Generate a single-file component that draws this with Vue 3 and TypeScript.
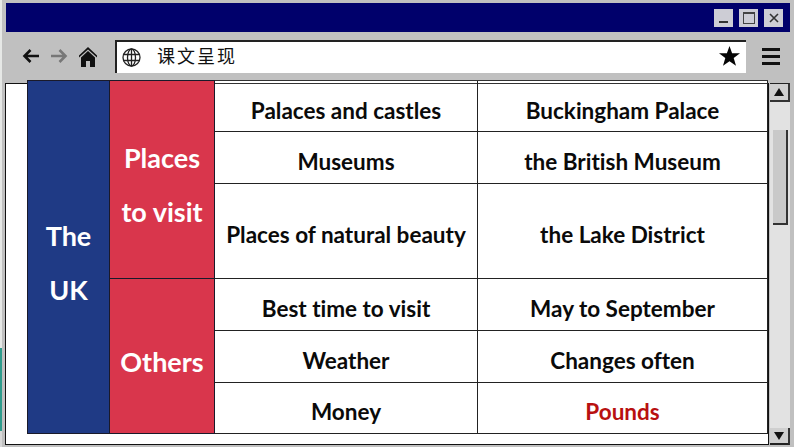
<script setup lang="ts">
interface Row { label: string; value: string; accent?: boolean }
const rows: Row[] = [
  { label: 'Palaces and castles', value: 'Buckingham Palace' },
  { label: 'Museums', value: 'the British Museum' },
  { label: 'Places of natural beauty', value: 'the Lake District' },
  { label: 'Best time to visit', value: 'May to September' },
  { label: 'Weather', value: 'Changes often' },
  { label: 'Money', value: 'Pounds', accent: true },
]
</script>

<template>
  <div class="window">
    <div class="strip"></div>
    <header class="titlebar">
      <button class="winbtn"><span class="min"></span></button>
      <button class="winbtn"><span class="max"></span></button>
      <button class="winbtn">
        <svg width="12" height="12" viewBox="0 0 12 12"><path d="M2 2l8 8M10 2l-8 8" stroke="#333" stroke-width="1.6" /></svg>
      </button>
    </header>
    <nav class="toolbar">
      <svg class="nav" width="18" height="16" viewBox="0 0 18 16"><path d="M17 8H3M8.500 2L2.500 8l6 6" fill="none" stroke="#111" stroke-width="2.6" /></svg>
      <svg class="nav fwd" width="18" height="16" viewBox="0 0 18 16"><path d="M1 8h14M9.500 2l6 6-6 6" fill="none" stroke="#777" stroke-width="2.6" /></svg>
      <svg class="home" width="18" height="20" viewBox="0 0 18 20"><path d="M9 0L0 8.500v2L9 2.500l9 8v-2z M9 4L2 10.500V20h5v-6h4v6h5v-9.500z" fill="#111" /></svg>
      <div class="address">
        <svg width="19" height="19" viewBox="0 0 19 19" fill="none" stroke="#222" stroke-width="1.3">
          <circle cx="9.500" cy="9.500" r="8.500" />
          <ellipse cx="9.500" cy="9.500" rx="4" ry="8.500" />
          <path d="M9.500 1v17M1.500 6.500h16M1.500 12.500h16" />
        </svg>
        <span class="url">课文呈现</span>
        <svg class="star" width="21" height="20" viewBox="0 0 21 20"><path d="M10.500 0l2.600 7.300h7.900l-6.300 4.800 2.300 7.700-6.500-4.600-6.500 4.600 2.300-7.700L0 7.300h7.900z" fill="#050505" /></svg>
      </div>
      <div class="burger"><i></i><i></i><i></i></div>
    </nav>
    <main class="body">
      <div class="pane"></div>
      <aside class="scrollbar">
        <div class="arrow"><span class="up"></span></div>
        <div class="track"><div class="thumb"></div></div>
        <div class="arrow down"><span class="dn"></span></div>
      </aside>
    </main>
    <section class="sheet">
      <div class="head navy">The<br />UK</div>
      <div class="head red g1">Places<br />to visit</div>
      <div class="head red g2">Others</div>
      <template v-for="(r, i) in rows" :key="r.label">
        <div class="cell label" :class="{ first: i === 0 }" :style="{ gridRow: i + 1 }">{{ r.label }}</div>
        <div class="cell value" :class="{ first: i === 0, accent: r.accent }" :style="{ gridRow: i + 1 }">{{ r.value }}</div>
      </template>
    </section>
  </div>
</template>

<style>
html, body { margin: 0; background: #fff; }
</style>

<style scoped>
.window {
  position: relative;
  width: 794px;
  height: 447px;
  box-sizing: border-box;
  padding: 3px 4px 0 6px;
  background: #c0c0c0;
  overflow: hidden;
  display: flex;
  flex-direction: column;
  font-family: Lato, "Liberation Sans", sans-serif;
  font-variant-ligatures: none;
}
.strip {
  position: absolute;
  left: 0;
  top: 0;
  width: 2px;
  height: 447px;
  background: linear-gradient(#e6e8e6 0 348px, #2f9c8c 348px 431px, #d8d8d8 431px);
}
.titlebar {
  height: 29px;
  flex: none;
  background: #00006b;
  display: flex;
  align-items: center;
  justify-content: flex-end;
  gap: 6px;
  padding-right: 7px;
  box-sizing: border-box;
}
.winbtn {
  width: 19px;
  height: 18px;
  padding: 0;
  border: 0;
  background: #cdcdd5;
  display: flex;
  align-items: center;
  justify-content: center;
  position: relative;
}
.min { width: 9px; height: 2px; background: #333; margin-top: 9px; }
.max { width: 10px; height: 9px; border: 1.5px solid #444; border-top-width: 2px; }
.toolbar {
  height: 48px;
  flex: none;
  display: flex;
  align-items: center;
  box-sizing: border-box;
  padding: 0 10px 0 16px;
}
.nav { flex: none; }
.fwd { margin-left: 10px; }
.home { margin-left: 11px; margin-top: 1px; flex: none; }
.address {
  margin-left: 18px;
  width: 631px;
  height: 33px;
  flex: none;
  box-sizing: border-box;
  background: #fff;
  border-top: 2px solid #222;
  border-left: 2px solid #222;
  display: flex;
  align-items: center;
  padding: 0 6px 0 5px;
}
.url {
  margin-left: 16px;
  margin-top: -5px;
  font-family: "Noto Sans CJK SC", sans-serif;
  font-size: 18px;
  letter-spacing: 2px;
  color: #111;
}
.star { margin-left: auto; margin-top: -3px; }
.burger {
  margin-left: 16px;
  width: 18px;
  display: flex;
  flex-direction: column;
  gap: 4px;
}
.burger i { display: block; height: 3px; background: #111; }
.body {
  flex: 1;
  display: flex;
  min-height: 0;
  margin-left: -1px;
  margin-top: 3px;
  padding-bottom: 2px;
}
.pane {
  width: 764px;
  box-sizing: border-box;
  background: #fff;
  border: 1.5px solid #111;
  flex: none;
}
.scrollbar {
  margin-left: 1px;
  width: 20px;
  background: #e2e2e2;
  display: flex;
  flex-direction: column;
  flex: none;
}
.arrow {
  height: 19px;
  flex: none;
  background: #cfcfcf;
  border-top: 1px solid #222;
  border-right: 2px solid #333;
  border-bottom: 2px solid #333;
  box-sizing: border-box;
  display: flex;
  align-items: center;
  justify-content: center;
}
.arrow.down { height: 17px; border-top: 0; border-bottom: 2px solid #222; }
.up, .dn { width: 0; height: 0; border-left: 5px solid transparent; border-right: 5px solid transparent; }
.up { border-bottom: 8px solid #111; }
.dn { border-top: 8px solid #111; }
.track { flex: 1; padding: 28px 0 0 3px; }
.thumb {
  width: 15px;
  height: 95px;
  box-sizing: border-box;
  background: #c9c9c9;
  border-right: 2px solid #333;
  border-bottom: 2px solid #333;
}
.sheet {
  position: absolute;
  left: 27px;
  top: 80px;
  width: 741px;
  height: 354px;
  box-sizing: border-box;
  display: grid;
  grid-template-columns: 82px 106px 263px 290px;
  grid-template-rows: 51px 52px 95px 52px 52px 52px;
}
.head {
  box-sizing: border-box;
  display: flex;
  align-items: center;
  justify-content: center;
  text-align: center;
  color: #fff;
  font-weight: 700;
  font-size: 27px;
  line-height: 54px;
  border: 1px solid #1a1a2a;
}
.navy { grid-column: 1; grid-row: 1 / 7; background: #1f3a85; border-right: 0; padding-top: 11px; }
.red { grid-column: 2; background: #d9364c; }
.g1 { grid-row: 1 / 4; border-bottom: 0; padding-top: 11px; }
.g2 { grid-row: 4 / 7; padding-top: 12px; }
.cell {
  box-sizing: border-box;
  display: flex;
  align-items: center;
  justify-content: center;
  background: #fff;
  color: #0a0a0a;
  font-weight: 700;
  font-size: 22.5px;
  border-top: 1px solid #222;
  border-right: 1px solid #222;
  padding-top: 7px;
}
.cell.first { border-top: 0; box-shadow: inset 0 3px 0 #fff, inset 0 4px 0 #333; padding-top: 10px; }
.sheet .cell:last-child, .sheet .cell:nth-last-child(2) { border-bottom: 1px solid #222; }
.label { grid-column: 3; }
.value { grid-column: 4; }
.accent { color: #b81010; }
.sheet::before {
  content: "";
  position: absolute;
  left: 188px;
  right: 0;
  top: 0;
  height: 1px;
  background: #333;
}
</style>
